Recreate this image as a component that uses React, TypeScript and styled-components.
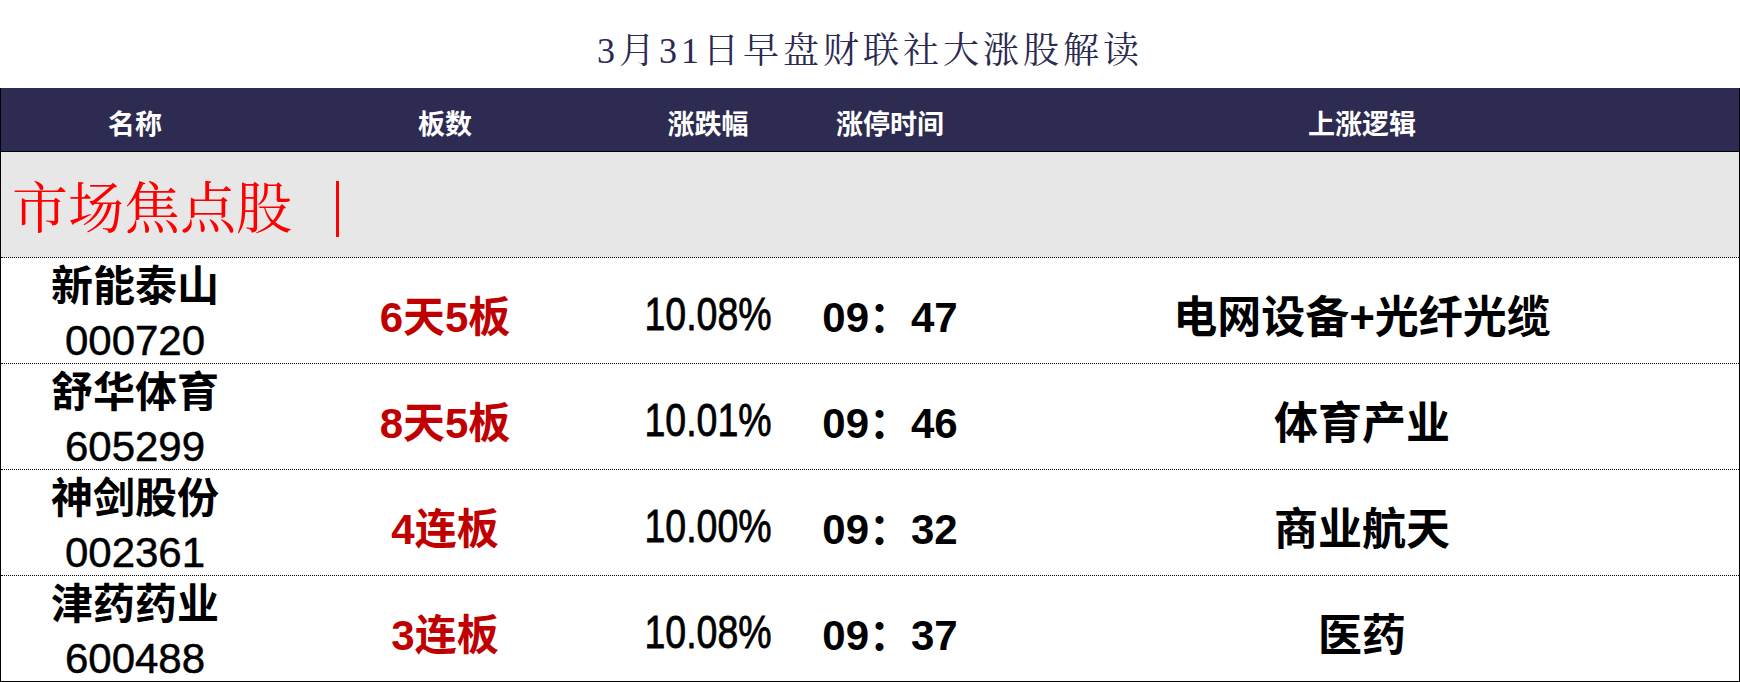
import React from "react";
import styled, { createGlobalStyle } from "styled-components";

const GlobalStyle = createGlobalStyle`
  html, body {
    margin: 0;
    padding: 0;
    background: #ffffff;
  }
  * { box-sizing: border-box; }
`;

const SANS = `"Liberation Sans", "Noto Sans CJK SC", sans-serif`;
const SERIF = `"Liberation Serif", "Noto Serif CJK SC", "Noto Sans CJK SC", serif`;

const Page = styled.div`
  width: 1740px;
  height: 682px;
  overflow: hidden;
  background: #ffffff;
`;

const Title = styled.h1`
  margin: 0;
  height: 88px;
  padding-top: 6px;
  display: flex;
  align-items: center;
  justify-content: center;
  font-family: ${SERIF};
  font-weight: 400;
  font-size: 36px;
  letter-spacing: 4px;
  color: #2b2a50;
`;

const Table = styled.div`
  border-left: 1px solid #000;
  border-right: 1px solid #000;
`;

const COLS = "268px 352px 174px 190px 1fr";

const HeaderRow = styled.div`
  display: grid;
  grid-template-columns: ${COLS};
  height: 64px;
  padding-top: 5px;
  background: #2d2b52;
  border-bottom: 1px solid #000;
  color: #ffffff;
  font-family: ${SANS};
  font-size: 27px;
  font-weight: 700;
`;

const HeadCell = styled.div`
  display: flex;
  align-items: center;
  justify-content: center;
`;

const SectionRow = styled.div`
  height: 106px;
  padding: 9px 0 0 11px;
  display: flex;
  align-items: center;
  background: #e7e7e7;
  border-bottom: 1px dotted #000;
`;

const SectionTitle = styled.span`
  font-family: ${SERIF};
  font-size: 56px;
  color: #ff0000;
  line-height: 1;
`;

const SectionBar = styled.span`
  display: inline-block;
  width: 3px;
  height: 56px;
  margin-left: 44px;
  background: #ff0000;
`;

const Row = styled.div<{ $last?: boolean }>`
  display: grid;
  grid-template-columns: ${COLS};
  height: 106px;
  padding-top: 6px;
  border-bottom: 1px ${(p) => (p.$last ? "solid" : "dotted")} #000;
  background: #ffffff;
  color: #000;
  font-family: ${SANS};
`;

const Cell = styled.div`
  display: flex;
  flex-direction: column;
  align-items: center;
  justify-content: center;
  white-space: nowrap;
`;

const NameCell = styled(Cell)`
  gap: 9px;
`;

const NameLine = styled.div`
  font-size: 42px;
  line-height: 45px;
  font-weight: 700;
`;

const CodeLine = styled.div`
  font-size: 42px;
  line-height: 45px;
  font-weight: 400;
  -webkit-text-stroke: 0.5px #000;
`;

const Boards = styled.div`
  font-size: 42px;
  font-weight: 700;
  color: #c00000;
`;

const Pct = styled.div`
  font-size: 46px;
  font-weight: 400;
  -webkit-text-stroke: 0.8px #000;
  transform: scaleX(0.815);
`;

const Time = styled.div`
  font-size: 42px;
  font-weight: 700;
`;

const Logic = styled.div`
  font-size: 44px;
  font-weight: 700;
`;

type Stock = {
  name: string;
  code: string;
  boards: string;
  pct: string;
  time: string;
  logic: string;
};

const stocks: Stock[] = [
  { name: "新能泰山", code: "000720", boards: "6天5板", pct: "10.08%", time: "09：47", logic: "电网设备+光纤光缆" },
  { name: "舒华体育", code: "605299", boards: "8天5板", pct: "10.01%", time: "09：46", logic: "体育产业" },
  { name: "神剑股份", code: "002361", boards: "4连板", pct: "10.00%", time: "09：32", logic: "商业航天" },
  { name: "津药药业", code: "600488", boards: "3连板", pct: "10.08%", time: "09：37", logic: "医药" },
];

const headers = ["名称", "板数", "涨跌幅", "涨停时间", "上涨逻辑"];

export default function App() {
  return (
    <Page>
      <GlobalStyle />
      <Title>3月31日早盘财联社大涨股解读</Title>
      <Table>
        <HeaderRow>
          {headers.map((h) => (
            <HeadCell key={h}>{h}</HeadCell>
          ))}
        </HeaderRow>
        <SectionRow>
          <SectionTitle>市场焦点股</SectionTitle>
          <SectionBar />
        </SectionRow>
        {stocks.map((s, i) => (
          <Row key={s.code} $last={i === stocks.length - 1}>
            <NameCell>
              <NameLine>{s.name}</NameLine>
              <CodeLine>{s.code}</CodeLine>
            </NameCell>
            <Cell>
              <Boards>{s.boards}</Boards>
            </Cell>
            <Cell>
              <Pct>{s.pct}</Pct>
            </Cell>
            <Cell>
              <Time>{s.time}</Time>
            </Cell>
            <Cell>
              <Logic>{s.logic}</Logic>
            </Cell>
          </Row>
        ))}
      </Table>
    </Page>
  );
}
